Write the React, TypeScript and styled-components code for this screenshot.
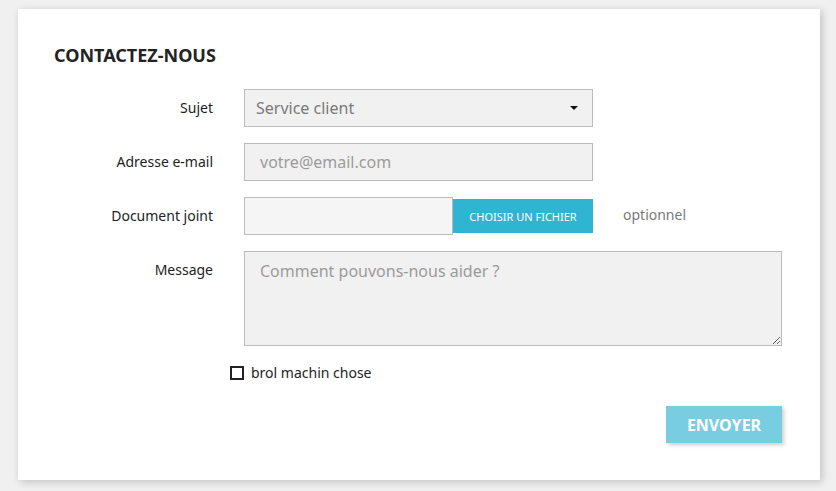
import React from 'react';
import styled, { createGlobalStyle } from 'styled-components';

const GlobalStyle = createGlobalStyle`
  html, body {
    margin: 0;
    padding: 0;
    background: #f0f0f0;
  }
  body {
    font-family: 'Noto Sans', 'Open Sans', sans-serif;
    color: #232323;
  }
  * {
    box-sizing: border-box;
  }
`;

const Page = styled.div`
  padding: 9px 16px 10px 18px;
`;

const Card = styled.section`
  background: #fff;
  box-shadow: 2px 2px 8px 0 rgba(0, 0, 0, 0.2);
  padding: 35px 36px 37px;
`;

const Title = styled.h3`
  margin: 0 0 23px;
  font-size: 18px;
  line-height: 22px;
  font-weight: 700;
  text-transform: uppercase;
  color: #232323;
`;

const FormRow = styled.div<{ $gap?: number }>`
  display: grid;
  grid-template-columns: 160px 349px 159px;
  column-gap: 30px;
  margin-bottom: ${(p) => (p.$gap ?? 16)}px;
`;

const Label = styled.label`
  text-align: right;
  font-size: 14px;
  line-height: 22px;
  padding: 8px 1px 0 0;
  color: #232323;
`;

const fieldBase = `
  width: 100%;
  height: 38px;
  background: #f1f1f1;
  border: 1px solid #bbb;
  font-family: 'Noto Sans', 'Open Sans', sans-serif;
  font-size: 16px;
  color: #7a7a7a;
  outline: none;
`;

const SelectWrap = styled.div`
  position: relative;
`;

const Select = styled.select`
  ${fieldBase}
  appearance: none;
  padding: 0 30px 0 11px;
`;

const Caret = styled.span`
  position: absolute;
  right: 15px;
  top: 17px;
  width: 0;
  height: 0;
  border-left: 4px solid transparent;
  border-right: 4px solid transparent;
  border-top: 4px solid #111;
  pointer-events: none;
`;

const Input = styled.input`
  ${fieldBase}
  padding: 0 15px;

  &::placeholder {
    color: #9b9b9b;
  }
`;

const FileGroup = styled.div`
  display: flex;
  align-items: center;
`;

const FileBox = styled.div`
  flex: 1;
  height: 38px;
  background: #f5f5f5;
  border: 1px solid #bbb;
`;

const FileButton = styled.button`
  width: 140px;
  height: 34px;
  border: none;
  background: #2fb5d2;
  color: #fff;
  font-family: 'Noto Sans', 'Open Sans', sans-serif;
  font-size: 11px;
  text-transform: uppercase;
  padding: 0;
`;

const Comment = styled.span`
  font-size: 14px;
  line-height: 22px;
  padding-top: 7px;
  color: #7a7a7a;
`;

const TextArea = styled.textarea`
  ${fieldBase}
  grid-column: 2 / 4;
  height: 95px;
  padding: 8px 15px;
  resize: vertical;

  &::placeholder {
    color: #9b9b9b;
  }
`;

const CheckRow = styled.label`
  grid-column: 2 / 4;
  margin-left: -14px;
  display: flex;
  align-items: center;
  gap: 7px;
  font-size: 14px;
  line-height: 20px;
  color: #232323;
`;

const CheckBox = styled.span`
  width: 14px;
  height: 14px;
  border: 2px solid #232323;
  background: #fff;
`;

const Footer = styled.div`
  display: flex;
  justify-content: flex-end;
  padding-right: 2px;
`;

const SubmitButton = styled.button`
  width: 116px;
  height: 37px;
  border: none;
  background: #78cde1;
  color: #fff;
  font-family: 'Noto Sans', 'Open Sans', sans-serif;
  font-size: 16px;
  font-weight: 700;
  text-transform: uppercase;
  box-shadow: 2px 2px 4px 0 rgba(0, 0, 0, 0.2);
`;

export default function App() {
  return (
    <Page>
      <GlobalStyle />
      <Card>
        <Title>Contactez-nous</Title>

        <FormRow>
          <Label>Sujet</Label>
          <SelectWrap>
            <Select defaultValue="service">
              <option value="service">Service client</option>
              <option value="webmaster">Webmaster</option>
            </Select>
            <Caret />
          </SelectWrap>
        </FormRow>

        <FormRow>
          <Label>Adresse e-mail</Label>
          <Input type="email" placeholder="votre@email.com" />
        </FormRow>

        <FormRow>
          <Label>Document joint</Label>
          <FileGroup>
            <FileBox />
            <FileButton type="button">Choisir un fichier</FileButton>
          </FileGroup>
          <Comment>optionnel</Comment>
        </FormRow>

        <FormRow $gap={17}>
          <Label>Message</Label>
          <TextArea placeholder="Comment pouvons-nous aider ?" />
        </FormRow>

        <FormRow $gap={23}>
          <span />
          <CheckRow>
            <CheckBox />
            brol machin chose
          </CheckRow>
        </FormRow>

        <Footer>
          <SubmitButton type="button">Envoyer</SubmitButton>
        </Footer>
      </Card>
    </Page>
  );
}
